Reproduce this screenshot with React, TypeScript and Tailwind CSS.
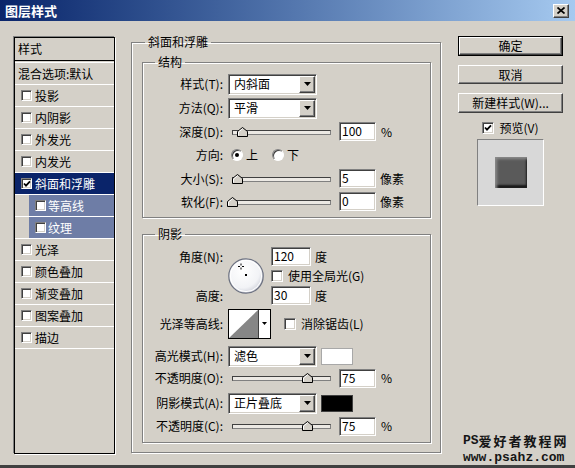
import React from "react";

const sunken =
  "border border-t-[#808080] border-l-[#808080] border-r-white border-b-white shadow-[inset_1px_1px_0_#404040,inset_-1px_-1px_0_#d4d0c8]";
const raised =
  "border border-t-white border-l-white border-r-[#404040] border-b-[#404040] shadow-[inset_-1px_-1px_0_#808080]";
const etched = "border border-[#808080] shadow-[1px_1px_0_#fff,inset_1px_1px_0_#fff]";

function Check({ checked = false, small = false }: { checked?: boolean; small?: boolean }) {
  return (
    <div
      className={`${small ? "w-[11px] h-[11px]" : "w-[12px] h-[12px]"} shrink-0 bg-white ${sunken} flex items-center justify-center`}
    >
      {checked && (
        <svg width="8" height="8" viewBox="0 0 8 8">
          <polyline points="1,3.5 3,5.6 7,1.4" fill="none" stroke="#000" strokeWidth="1.8" />
        </svg>
      )}
    </div>
  );
}

function Radio({ on = false }: { on?: boolean }) {
  return (
    <div className="w-[12px] h-[12px] shrink-0 rounded-full bg-white border border-t-[#808080] border-l-[#808080] border-r-white border-b-white shadow-[inset_1px_1px_0_#404040] flex items-center justify-center">
      {on && <div className="w-[4px] h-[4px] rounded-full bg-black" />}
    </div>
  );
}

function Arrow() {
  return (
    <svg width="7" height="4" viewBox="0 0 7 4">
      <polygon points="0,0 7,0 3.5,4" fill="#000" />
    </svg>
  );
}

function Select({ v }: { v: string }) {
  return (
    <div className={`ml-[5px] w-[89px] h-[21px] shrink-0 bg-white ${sunken} flex items-center`}>
      <span className="flex-1 pl-[5px]">{v}</span>
      <div className={`mr-[1px] w-[16px] h-[17px] bg-[#d4d0c8] ${raised} flex items-center justify-center`}>
        <Arrow />
      </div>
    </div>
  );
}

function Field({ v, wide = false }: { v: string; wide?: boolean }) {
  return (
    <div
      className={`${wide ? "w-[40px]" : "w-[37px] ml-[8px]"} h-[19px] shrink-0 bg-white ${sunken} pl-[2px] leading-[16px]`}
    >
      {v}
    </div>
  );
}

function Slider({ thumb }: { thumb: string }) {
  return (
    <div className="relative ml-[5px] w-[103px] h-[10px] shrink-0">
      <div className="ml-[4px] mt-[3px] w-[99px] h-[5px] bg-[#ece9e4] border border-t-[#404040] border-l-[#404040] border-r-[#808080] border-b-[#808080]" />
      <svg className={`absolute top-0 ${thumb}`} width="11" height="10" viewBox="0 0 11 10">
        <path d="M0.5 9.5 V4.5 L5.5 0.5 L10.5 4.5 V9.5 Z" fill="#d4d0c8" stroke="#000" />
        <path d="M1.5 8.5 V5 L5.5 1.8" fill="none" stroke="#fff" />
      </svg>
    </div>
  );
}

function Row({ label, h, children }: { label: string; h: string; children?: React.ReactNode }) {
  return (
    <div className={`flex items-center ${h}`}>
      <span className="w-[80px] shrink-0 text-right whitespace-nowrap">{label}</span>
      {children}
    </div>
  );
}

function Dial() {
  return (
    <svg width="36" height="36" viewBox="0 0 36 36">
      <defs>
        <radialGradient id="dial" cx="40%" cy="35%" r="70%">
          <stop offset="0" stopColor="#ffffff" />
          <stop offset="0.7" stopColor="#f2f3f6" />
          <stop offset="1" stopColor="#c9ccd6" />
        </radialGradient>
      </defs>
      <circle cx="18" cy="18" r="17.2" fill="url(#dial)" stroke="#6c7180" strokeWidth="1.2" />
      <circle cx="18" cy="18" r="15.6" fill="none" stroke="#ffffff" strokeWidth="1" />
      <path d="M10 8.5 H12 M14 8.5 H16 M13 5.5 V7.5 M13 9.5 V11.5" stroke="#000" strokeWidth="1" />
      <rect x="17" y="16" width="2" height="2" fill="#000" />
    </svg>
  );
}

function Contour() {
  return (
    <svg width="43" height="30" viewBox="0 0 43 30">
      <rect x="0.5" y="0.5" width="42" height="29" fill="#fff" stroke="#000" />
      <polygon points="1,29 30,1 30,29" fill="#868686" />
      <line x1="30.5" y1="1" x2="30.5" y2="29" stroke="#404040" />
      <polygon points="34,13 39,13 36.5,16" fill="#000" />
    </svg>
  );
}

const items = [
  { t: "投影" },
  { t: "内阴影" },
  { t: "外发光" },
  { t: "内发光" },
  { t: "斜面和浮雕", sel: true, on: true },
  { t: "等高线", sub: true },
  { t: "纹理", sub: true },
  { t: "光泽" },
  { t: "颜色叠加" },
  { t: "渐变叠加" },
  { t: "图案叠加" },
  { t: "描边" },
];

export default function App() {
  return (
    <div className="relative w-[575px] h-[468px] overflow-hidden bg-[#d4d0c8] border-b-[3px] border-b-[#404040] text-[12px] leading-[16px] text-black font-['Noto_Sans_CJK_SC',sans-serif] flex flex-col">
      {/* title bar */}
      <div className="h-[21px] shrink-0 flex items-center bg-linear-to-r from-[#0a246a] to-[#a6caf0] pl-[5px] pr-[6px]">
        <span className="text-white font-bold text-[13px]">图层样式</span>
        <div className={`ml-auto w-[16px] h-[14px] bg-[#d4d0c8] ${raised} flex items-center justify-center`}>
          <svg width="8" height="7" viewBox="0 0 8 7">
            <path d="M0.5 0.5 L7.5 6.5 M7.5 0.5 L0.5 6.5" stroke="#000" strokeWidth="1.7" />
          </svg>
        </div>
      </div>

      <div className="flex items-start pl-[14px] pt-[13px]">
        {/* style list */}
        <div className="mt-[3px] w-[101px] h-[417px] shrink-0 border border-black shadow-[-1px_-1px_0_#808080,1px_1px_0_#fff]">
          <div className="h-[23px] border-b border-black pl-[3px] flex items-center">样式</div>
          <div className="h-[2px] border-b border-white" />
          <div className="h-[22px] border-b border-white pl-[3px] flex items-center whitespace-nowrap">混合选项:默认</div>
          {items.map((it) =>
            it.sub ? (
              <div key={it.t} className="h-[22px] border-b border-white pl-[14px]">
                <div className="h-full bg-[#6e7da6] text-white flex items-center pl-[6px]">
                  <Check small />
                  <span className="ml-[2px]">{it.t}</span>
                </div>
              </div>
            ) : (
              <div
                key={it.t}
                className={`h-[22px] border-b border-white flex items-center pl-[6px] ${it.sel ? "bg-[#0a246a] text-white" : ""}`}
              >
                <Check small checked={it.on} />
                <span className="ml-[3px]">{it.t}</span>
              </div>
            )
          )}
        </div>

        {/* bevel and emboss */}
        <fieldset className={`ml-[16px] w-[310px] h-[419px] shrink-0 ${etched}`}>
          <legend className="ml-[13px] px-[3px]">斜面和浮雕</legend>

          <fieldset className={`ml-[10px] mt-[4px] w-[289px] h-[164px] ${etched}`}>
            <legend className="ml-[12px] px-[3px]">结构</legend>
            <div className="mt-[2px]">
              <Row label="样式(T):" h="h-[24px]">
                <Select v="内斜面" />
              </Row>
              <Row label="方法(Q):" h="h-[24px]">
                <Select v="平滑" />
              </Row>
              <Row label="深度(D):" h="h-[23px]">
                <Slider thumb="left-[9px]" />
                <Field v="100" />
                <span className="ml-[5px]">%</span>
              </Row>
              <Row label="方向:" h="h-[24px]">
                <span className="ml-[8px]">
                  <Radio on />
                </span>
                <span className="ml-[3px]">上</span>
                <span className="ml-[14px]">
                  <Radio />
                </span>
                <span className="ml-[3px]">下</span>
              </Row>
              <Row label="大小(S):" h="h-[23px]">
                <Slider thumb="left-[4px]" />
                <Field v="5" />
                <span className="ml-[4px]">像素</span>
              </Row>
              <Row label="软化(F):" h="h-[23px]">
                <Slider thumb="left-[-1px]" />
                <Field v="0" />
                <span className="ml-[4px]">像素</span>
              </Row>
            </div>
          </fieldset>

          <fieldset className={`ml-[10px] mt-[8px] w-[289px] h-[217px] ${etched}`}>
            <legend className="ml-[12px] px-[3px]">阴影</legend>
            <div className="mt-[5px] flex h-[58px]">
              <div className="w-[80px] shrink-0 flex flex-col justify-between text-right">
                <span className="h-[19px] leading-[19px]">角度(N):</span>
                <span className="h-[19px] leading-[19px]">高度:</span>
              </div>
              <div className="ml-[5px] self-center h-[36px]">
                <Dial />
              </div>
              <div className="ml-[7px] flex flex-col">
                <div className="h-[19px] flex items-center">
                  <Field v="120" wide />
                  <span className="ml-[4px]">度</span>
                </div>
                <div className="h-[20px] flex items-center">
                  <Check />
                  <span className="ml-[5px]">使用全局光(G)</span>
                </div>
                <div className="h-[19px] flex items-center">
                  <Field v="30" wide />
                  <span className="ml-[4px]">度</span>
                </div>
              </div>
            </div>
            <Row label="光泽等高线:" h="mt-[4px] h-[30px]">
              <span className="ml-[5px] h-[30px]">
                <Contour />
              </span>
              <span className="ml-[13px]">
                <Check />
              </span>
              <span className="ml-[5px]">消除锯齿(L)</span>
            </Row>
            <Row label="高光模式(H):" h="mt-[6px] h-[22px]">
              <Select v="滤色" />
              <div className="ml-[4px] w-[32px] h-[17px] bg-white border border-[#a8a8a8]" />
            </Row>
            <Row label="不透明度(O):" h="h-[22px]">
              <Slider thumb="left-[74px]" />
              <Field v="75" />
              <span className="ml-[5px]">%</span>
            </Row>
            <Row label="阴影模式(A):" h="h-[28px]">
              <Select v="正片叠底" />
              <div className="ml-[4px] w-[32px] h-[17px] bg-black border border-[#404040]" />
            </Row>
            <Row label="不透明度(C):" h="h-[18px]">
              <Slider thumb="left-[74px]" />
              <Field v="75" />
              <span className="ml-[5px]">%</span>
            </Row>
          </fieldset>
        </fieldset>

        {/* buttons */}
        <div className="ml-[17px] mt-[2px] w-[105px] shrink-0 flex flex-col items-center">
          <div className="w-full h-[20px] border border-black">
            <div className={`h-full ${raised} flex items-center justify-center`}>确定</div>
          </div>
          <div className={`mt-[9px] w-full h-[19px] ${raised} flex items-center justify-center`}>取消</div>
          <div className={`mt-[9px] w-full h-[20px] ${raised} flex items-center justify-center`}>新建样式(W)...</div>
          <div className="mt-[9px] h-[12px] flex items-center">
            <Check checked />
            <span className="ml-[5px]">预览(V)</span>
          </div>
          <div className="mt-[5px] w-[67px] h-[67px] bg-[#d8d8d8] border border-t-[#808080] border-l-[#808080] border-r-white border-b-white flex items-center justify-center">
            <div className="w-[32px] h-[31px] bg-[#5a5a5a] shadow-[inset_2px_2px_3px_#8c8c8c,inset_-1px_-3px_2px_#1a1a1a]" />
          </div>
        </div>
      </div>

      {/* watermark */}
      <div className="absolute left-[463px] top-[432px] flex flex-col font-bold text-[#161616]">
        <div className="h-[16px] flex items-center whitespace-nowrap">
          <span className="font-['Liberation_Mono',monospace] text-[13px] leading-[13px]">PS</span>
          <span className="text-[13px] leading-[13px] tracking-[2px]">爱好者教程网</span>
        </div>
        <div className="mt-[3px] h-[13px] leading-[13px] font-['Liberation_Mono',monospace] text-[13px] whitespace-nowrap">
          www.psahz.com
        </div>
      </div>
    </div>
  );
}
